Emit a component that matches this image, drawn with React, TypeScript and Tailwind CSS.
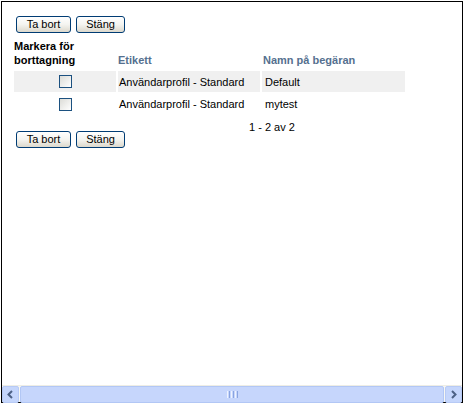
import React from "react";

const btn =
  "h-[17px] rounded-[3px] border border-[#003c74] bg-gradient-to-b from-white via-[#f4f4f0] to-[#dcd8cc] text-[11px] leading-[15px] text-black flex items-center justify-center";

function Buttons() {
  return (
    <div className="flex gap-[5px] ml-[2px]">
      <div className={`${btn} w-[55px]`}>Ta bort</div>
      <div className={`${btn} w-[49px]`}>Stäng</div>
    </div>
  );
}

function Check() {
  return (
    <div className="w-[13px] h-[13px] border border-[#1c5180] bg-gradient-to-br from-[#dcdcd7] to-white" />
  );
}

export default function App() {
  return (
    <div
      className="w-[464px] h-[404px] bg-white pl-px pt-px"
      style={{ fontFamily: '"Liberation Sans", Arial, sans-serif' }}
    >
      <div className="w-[462px] h-[402px] border border-black flex flex-col">
        <div className="flex-1 pl-[12px] pt-[14px]">
          <Buttons />
          <div className="mt-[6px] grid grid-cols-[102px_142px_143px] gap-x-[2px] gap-y-[2px] text-[11px] leading-[14px]">
            <div className="font-bold text-black pb-[2px]">
              Markera för
              <br />
              borttagning
            </div>
            <div className="font-bold text-[#55708f] self-end pb-[2px]">Etikett</div>
            <div className="font-bold text-[#55708f] self-end pb-[2px] pl-px">Namn på begäran</div>

            <div className="h-[21px] bg-[#f0f0f0] flex items-center justify-center">
              <Check />
            </div>
            <div className="h-[21px] bg-[#f0f0f0] flex items-center pl-px">Användarprofil - Standard</div>
            <div className="h-[21px] bg-[#f0f0f0] flex items-center pl-[3px]">Default</div>

            <div className="h-[20px] flex items-center justify-center">
              <Check />
            </div>
            <div className="h-[20px] flex items-center pl-px">Användarprofil - Standard</div>
            <div className="h-[20px] flex items-center pl-[3px]">mytest</div>
          </div>
          <div className="flex items-start mt-[6px]">
            <div className="mt-[11px]">
              <Buttons />
            </div>
            <div className="ml-[124px] text-[11px] leading-[14px]">1 - 2 av 2</div>
          </div>
        </div>
        <div className="border-t border-[#eeede5] flex h-[17px] bg-[#f7f7f3]">
          <div className="w-[17px] h-[17px] rounded-[2px] border border-[#b7caf5] bg-[#c5d6fc] flex items-center justify-center">
            <svg width="9" height="9" viewBox="0 0 9 9">
              <path d="M6 1 L2.5 4.5 L6 8" stroke="#4d6185" strokeWidth="2" fill="none" />
            </svg>
          </div>
          <div className="flex-1 mx-px h-[17px] rounded-[2px] border border-[#b2c7f5] bg-[#c6d6fc] flex items-center justify-center">
            <div className="flex gap-[1px]">
              <div className="w-[1px] h-[7px] bg-[#eef3fe]" />
              <div className="w-[1px] h-[7px] bg-[#8aa4e0]" />
              <div className="w-[1px] h-[7px] bg-[#eef3fe]" />
              <div className="w-[1px] h-[7px] bg-[#8aa4e0]" />
              <div className="w-[1px] h-[7px] bg-[#eef3fe]" />
              <div className="w-[1px] h-[7px] bg-[#8aa4e0]" />
            </div>
          </div>
          <div className="w-[17px] h-[17px] rounded-[2px] border border-[#b7caf5] bg-[#c5d6fc] flex items-center justify-center">
            <svg width="9" height="9" viewBox="0 0 9 9">
              <path d="M3 1 L6.5 4.5 L3 8" stroke="#4d6185" strokeWidth="2" fill="none" />
            </svg>
          </div>
        </div>
      </div>
    </div>
  );
}
